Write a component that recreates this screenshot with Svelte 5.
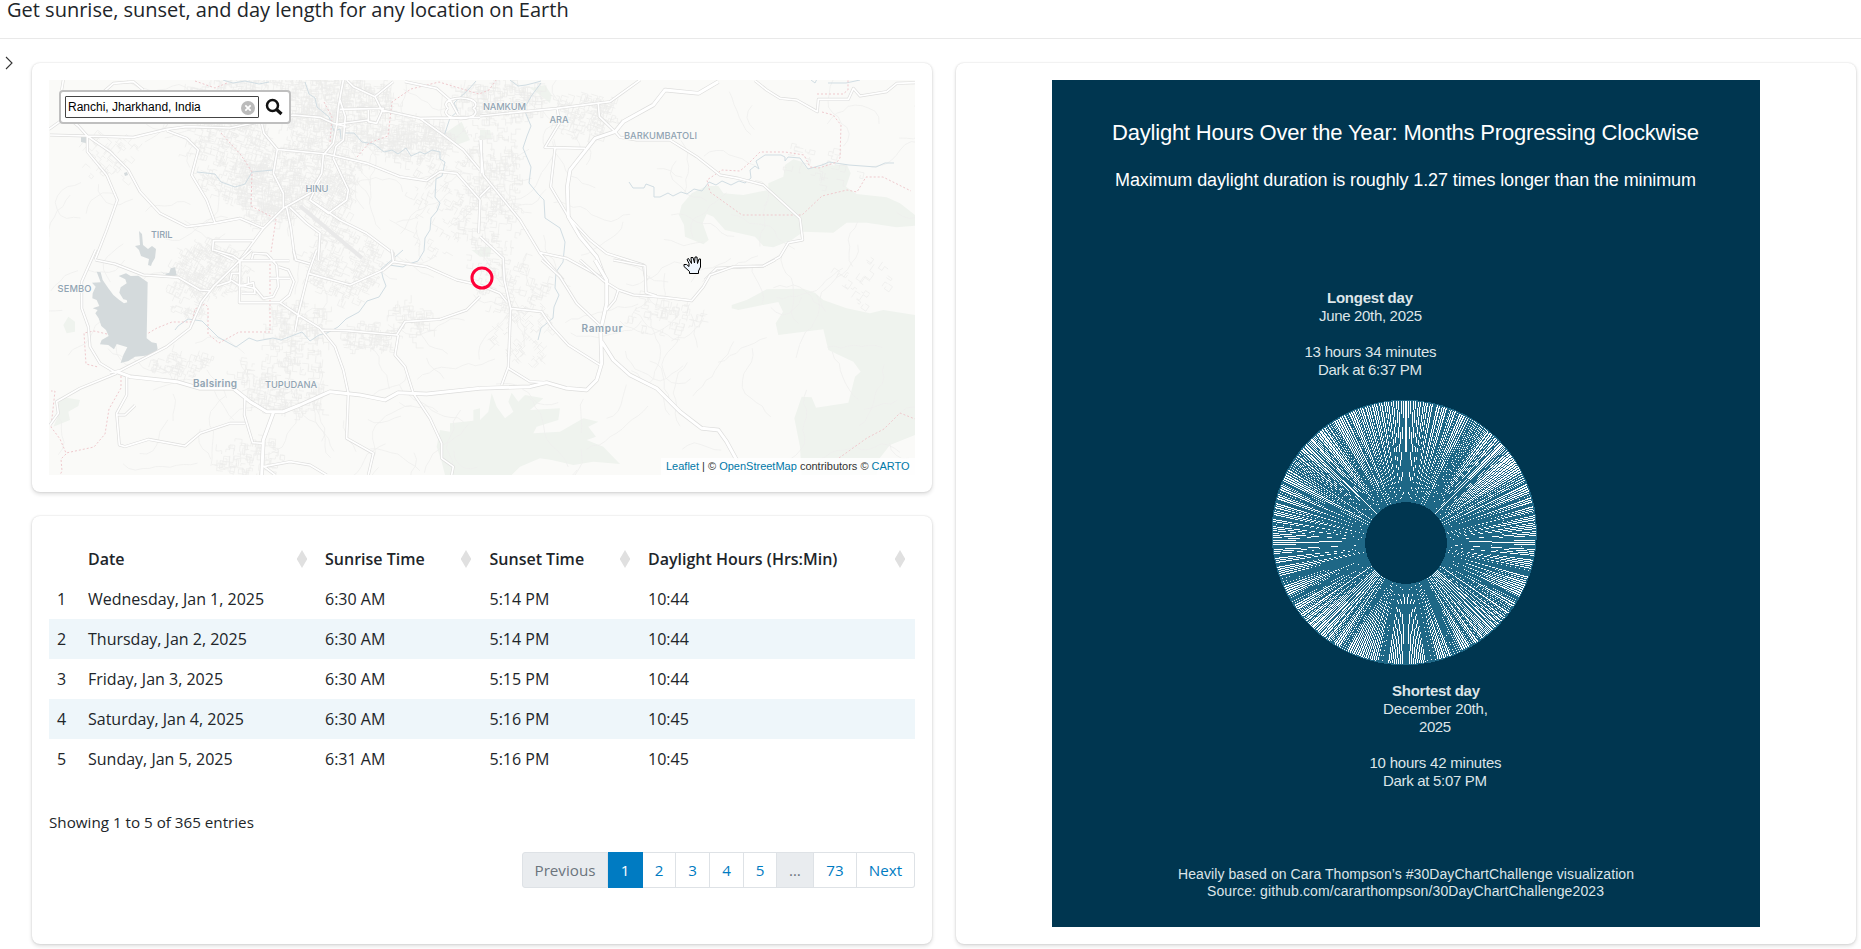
<script>
  const rows = [
    ['Wednesday, Jan 1, 2025', '6:30 AM', '5:14 PM', '10:44'],
    ['Thursday, Jan 2, 2025', '6:30 AM', '5:14 PM', '10:44'],
    ['Friday, Jan 3, 2025', '6:30 AM', '5:15 PM', '10:44'],
    ['Saturday, Jan 4, 2025', '6:30 AM', '5:16 PM', '10:45'],
    ['Sunday, Jan 5, 2025', '6:31 AM', '5:16 PM', '10:45']
  ];
  const heads = ['Date', 'Sunrise Time', 'Sunset Time', 'Daylight Hours (Hrs:Min)'];
  const pages = [
    ['Previous', 86, 'off'], ['1', 35, 'on'], ['2', 33, ''], ['3', 34, ''], ['4', 34, ''],
    ['5', 33, ''], ['…', 37, 'off'], ['73', 43, ''], ['Next', 58, '']
  ];

  // Radial chart: light bars separated by one outline per day, rasterised to whole pixels.
  function spokes() {
    const ox = 1271, oy = 399, n = 268;
    const cx = 1405.5, cy = 542.5;
    const grid = new Uint8Array(n * n);
    const ccx = 1404.2, ccy = 532.5, R = 132;
    for (let y = 0; y < n; y++) {
      for (let x = 0; x < n; x++) {
        const px = ox + x + 0.5, py = oy + y + 0.5;
        if (Math.hypot(px - ccx, py - ccy) < 131.5 && Math.hypot(px - 1406, py - 543) > 41.5) grid[y * n + x] = 1;
      }
    }
    function edge(a) {
      const dx = Math.sin(a), dy = -Math.cos(a);
      const px = cx - ccx, py = cy - ccy;
      const b = px * dx + py * dy;
      return -b + Math.sqrt(b * b - (px * px + py * py - R * R));
    }
    function line(a) {
      const dx = Math.sin(a), dy = -Math.cos(a), r1 = edge(a);
      let x0 = Math.round(cx + dx * 41 - ox), y0 = Math.round(cy + dy * 41 - oy);
      const x1 = Math.round(cx + dx * r1 - ox), y1 = Math.round(cy + dy * r1 - oy);
      const ax = Math.abs(x1 - x0), ay = Math.abs(y1 - y0);
      const sx = x0 < x1 ? 1 : -1, sy = y0 < y1 ? 1 : -1;
      let e = ax - ay;
      for (let k = 0; k < 400; k++) {
        if (x0 >= 0 && y0 >= 0 && x0 < n && y0 < n) grid[y0 * n + x0] = 0;
        if (x0 === x1 && y0 === y1) break;
        const e2 = 2 * e;
        if (e2 > -ay) { e -= ay; x0 += sx; }
        if (e2 < ax) { e += ax; y0 += sy; }
      }
    }
    const step = (Math.PI * 2) / 365;
    for (let i = 0; i < 365; i++) {
      line((i + 0.41) * step);
      line((i + 0.59) * step);
    }
    let d = '';
    for (let y = 0; y < n; y++) {
      for (let x = 0; x < n; x++) {
        if (!grid[y * n + x]) continue;
        let w = 1;
        while (x + w < n && grid[y * n + x + w]) w++;
        d += `M${ox + x} ${oy + y}h${w}v1h-${w}z`;
        x += w;
      }
    }
    return d;
  }
  const spokePath = spokes();

  // Local streets: dense grids in built-up areas and wandering rural tracks.
  let seed = 7;
  function rnd() {
    seed = (seed * 16807) % 2147483647;
    return seed / 2147483647;
  }
  function town(cx, cy, rx, ry, n, rot) {
    let d = '';
    for (let i = 0; i < n; i++) {
      const t = rnd() * 6.283, q = Math.sqrt(rnd());
      let x = cx + Math.cos(t) * rx * q, y = cy + Math.sin(t) * ry * q;
      d += `M${x.toFixed(1)} ${y.toFixed(1)}`;
      let a = rot + Math.floor(rnd() * 4) * 1.571;
      const m = 2 + Math.floor(rnd() * 3);
      for (let j = 0; j < m; j++) {
        const l = 2 + rnd() * 6;
        x += Math.cos(a) * l; y += Math.sin(a) * l;
        d += `L${x.toFixed(1)} ${y.toFixed(1)}`;
        a += rnd() < 0.5 ? 1.571 : -1.571;
      }
    }
    return d;
  }
  function tracks(n) {
    let d = '';
    for (let i = 0; i < n; i++) {
      let x = 49 + rnd() * 866, y = 80 + rnd() * 395, a = rnd() * 6.283;
      d += `M${x.toFixed(1)} ${y.toFixed(1)}`;
      const m = 4 + Math.floor(rnd() * 9);
      for (let j = 0; j < m; j++) {
        a += (rnd() - 0.5) * 1.3;
        x += Math.cos(a) * 7; y += Math.sin(a) * 7;
        d += `L${x.toFixed(1)} ${y.toFixed(1)}`;
      }
    }
    return d;
  }
  const dense = [
    [290, 100, 105, 24, 330, 0.1], [232, 150, 40, 50, 260, 0.3], [270, 190, 36, 34, 300, 0.1],
    [325, 150, 40, 40, 220, 0.2], [345, 110, 50, 30, 200, 0], [410, 140, 42, 18, 240, 0.1],
    [330, 200, 22, 28, 150, 0.5], [500, 100, 45, 20, 150, 0], [585, 115, 32, 20, 110, 0.3],
    [490, 160, 30, 50, 130, 0], [490, 225, 35, 45, 100, 0.1], [345, 265, 40, 35, 190, 0.4],
    [210, 270, 35, 26, 170, 0.5], [190, 290, 18, 30, 70, 0.4], [300, 330, 30, 28, 120, 0],
    [285, 385, 45, 30, 160, 0.1], [370, 338, 24, 14, 70, 0.1], [180, 364, 30, 12, 50, 0.3],
    [250, 460, 36, 18, 80, 0.1], [410, 320, 22, 18, 50, 0], [107, 155, 25, 25, 40, 0.7],
    [515, 285, 40, 28, 70, 0.3], [525, 335, 30, 30, 60, 0.8], [670, 315, 40, 16, 50, 0.2],
    [820, 165, 40, 20, 25, 0.2], [870, 280, 35, 25, 20, 0.6], [440, 205, 30, 60, 60, 0.5]
  ].map((t) => town(...t)).join('');
  const rural = tracks(190);

  const A = [
    'M147 388L200 350L235 378L262 408L262 455L320 525L352 600L320 690L285 780',
    'M150 405L262 408L400 412L500 388L560 380L690 384L780 365L880 345L960 352L1000 370L1040 380',
    'M190 240L185 270',
    'M262 408L330 455L385 510L420 575L480 640L560 680L640 670L720 655L790 685',
    'M500 392L560 415L595 450L575 525L620 600L645 668',
    'M785 370L792 400L832 448L820 520L850 580L850 625',
    'M832 448L980 462L1100 490L1200 530L1280 542L1320 515L1370 520L1440 600',
    'M720 780L790 685L850 625L930 580L965 520L970 465L1000 430L1010 375L1015 320L1030 240',
    'M1000 475L1008 440L1030 420L1036 350L1020 300',
    'M860 622L872 680L885 780', 'M870 622L920 670L960 700L955 780',
    'M1000 475L1045 570L1040 600L985 640L930 600L960 540',
    'M930 600L1020 660L1100 700L1180 760L1182 780', 'M1040 240L1060 260L1125 290L1180 245',
    'M1125 290L1145 330L1260 355L1330 405L1390 450L1440 510', 'M1020 328L1150 325L1130 370L1105 365L1105 330',
    'M1015 372L1105 360', 'M1260 355L1440 352', 'M1215 245L1310 265L1350 300L1375 345',
    'M1345 325A45 20 0 1 0 1420 325A45 20 0 1 0 1345 325',
    'M760 722L640 722L638 750L700 780', 'M300 285L340 250L400 245L430 270', 'M1440 600L1436 700'
  ];
  const B = [
    'M0 168L130 155L230 145L390 125L480 60', 'M355 130L358 170L405 215L420 232L470 240L570 240L650 290L720 345L775 355L850 375L905 425L960 475L968 540L925 548L900 590L850 618L710 625L675 660',
    'M232 145L238 190L195 262L315 265', 'M225 265L212 380L265 470L330 540L380 580L490 615L498 660',
    'M0 240L10 345L120 480L180 580L250 660', 'M180 578L260 595L370 655', 'M0 530L70 595L70 660',
    'M0 410L30 380M4 240L4 340', 'M825 62L860 90L900 115L950 120L1012 155L1015 118L1105 118L1120 85L1140 108L1220 95L1250 70L1305 68'
  ];
  const C = [
    'M287 0L245 95L245 175L265 230L270 290L300 340L350 370', 'M287 30L345 42L430 75L535 82L600 120L630 122',
    'M755 0L720 32L640 110L605 155L570 235L500 290L360 362L330 368',
    'M640 0L700 18L720 32L718 158L840 158L895 195L960 235L1005 290L1030 360L1045 430L1040 565L1120 610L1105 675',
    'M720 32L868 32', 'M755 28L760 10L800 12L830 45L835 110L820 140L790 145L765 115L720 105', 'M835 50L865 60L882 95L868 135L840 158',
    'M720 70L695 70L690 95L650 108M690 88L720 108L760 98L765 130L725 130', 'M808 85L870 85M745 80L745 105',
    'M950 0L925 70L895 190L885 245', 'M925 70L1050 105L1150 60L1180 35L1280 50L1370 90L1415 100L1440 115',
    'M880 0L888 30L930 42', 'M1175 0L1180 35', 'M965 240L1040 242L1190 255L1215 215L1320 208L1400 180L1440 140',
    'M1195 255L1185 315L1215 350L1240 430L1290 505L1325 580L1325 625L1360 650L1355 675',
    'M150 525L175 490L170 455L240 415L350 370', 'M380 380L380 435L350 490L358 585L375 590L445 568L555 588L600 550L690 520L735 520',
    'M350 495L375 495L405 466', 'M735 440L733 495L758 578L788 580', 'M790 650L870 635L930 645L980 675', 'M790 648L825 675'
  ];
  const D = [
    'M70 0L73 60L92 145L85 320L65 375', 'M92 145L185 155L215 200L265 255L360 315', 'M0 75L60 100L80 125',
    'M185 0L240 50L290 130L370 205', 'M300 0L370 62L415 90L460 105L550 112L635 122L670 80L690 45L760 20L850 18L885 0',
    'M415 90L405 120L380 150', 'M400 0L495 18L498 98L530 108', 'M85 325L150 365L205 368'
  ];
  const bigB = ['M715 65L655 100L555 90L520 135L430 185L405 215L345 235L270 330L262 380L265 470L300 530L350 590L380 670'];
  const bigC = ['M350 365L390 380L530 395L600 415L700 415L750 455L800 485L850 485L900 465L990 425L1080 435L1155 450L1195 428L1280 432L1440 415', 'M820 488L790 570L785 675'];
  const bigD = ['M0 385L150 380L200 368L260 385L320 390L350 360L365 310L362 210L380 130L380 60L345 0', 'M365 245L400 300L450 345L530 385L600 455L665 505L715 510L740 545L770 600'];
  const layers = [
    ['scale(.33333)', A, []],
    ['translate(480 60) scale(.33333)', B, bigB],
    ['translate(0 250) scale(.33333)', C, bigC],
    ['translate(480 260) scale(.33333)', D, bigD]
  ];
</script>

<header>Get sunrise, sunset, and day length for any location on Earth</header>
<main>
  <svg class="chev" width="9" height="14" viewBox="0 0 9 14"><path d="M1 1l6 6-6 6" fill="none" stroke="#333" stroke-width="1.1" /></svg>
  <div class="left">
    <section class="card mapcard">
      <div class="map">
        <svg class="tiles" width="866" height="395" viewBox="49 80 866 395">
          <rect x="49" y="80" width="866" height="395" fill="#fafaf8" />
          <g fill="#eff3ee">
            <g transform="translate(480 60) scale(.33333)">
              <path d="M635 400L680 378L715 378L730 400L790 405L865 390L865 370L910 350L915 315L940 298L965 305L980 325L1100 312L1112 340L1098 380L1130 402L1220 412L1260 430L1305 465V497L1250 502L1160 488L1100 488L1060 518L970 515L935 540L880 562L850 558L825 530L735 510L700 470L680 462L668 490L686 540L670 553L615 530L612 495L597 465L605 435Z" />
              <path d="M150 85L195 75L215 105L210 130L180 105ZM0 210L30 210L35 235L0 240ZM0 560L35 560L30 590L0 590Z" />
            </g>
            <g transform="translate(480 260) scale(.33333)">
              <path d="M755 135L800 120L860 88L970 86L1005 98L1030 120L1100 145L1170 160L1210 150L1305 165V525L1230 555L1195 600L1190 645H965L960 560L943 475L965 410L995 412L1008 443L1105 428L1125 350L1142 335L1120 305L1045 270L1030 208L895 225L887 190L909 155L895 126L775 150L755 145Z" />
              <path d="M0 480L25 455L35 400L50 440L75 475L100 455L85 425L95 398L115 425L135 405L190 415L150 450L240 445L235 480L170 500L160 520L240 515L310 475L355 485L325 500L348 530L320 540L370 560L420 612L340 605L280 615L215 600L180 595L120 620L95 645H0Z" />
            </g>
            <g transform="translate(0 250) scale(.33333)">
              <path d="M1440 475L1420 480L1420 512L1350 520L1350 545L1320 540L1310 590L1325 635L1335 675H1440ZM170 460L190 442L240 450L235 468L205 485L210 510L160 530L178 490ZM190 225L205 200L225 215L225 245L200 250Z" />
              <path d="M1415 0H1440V20ZM1335-350L1385-385L1410-330L1370-315Z" />
            </g>
          </g>
          <path d={rural} fill="none" stroke="#efefed" stroke-width=".8" />
          <path d={dense} fill="none" stroke="#ededeb" stroke-width=".7" />
          <path d="M300 206L362 258" stroke="#e9e9e9" stroke-width="4" />
          <g fill="#d4dadc">
            <path d="M139 231l3 3 1 11 5 4 4-3 4 3-1 9-3 5-1 3-3-1 1-6-8-3-2-6-4-4 5-1zM81 137l5-1v7l-5-1zM124 173l3-1 1 3-3 1z" />
            <g transform="translate(0 250) scale(.33333)">
              <path d="M290 65L302 67L308 90L325 115L340 135L358 150L372 160L382 157L380 150L370 148L358 128L362 112L380 100L376 88L356 78L378 70L392 78L415 77L443 97L440 265L455 277L470 280L473 298L460 312L435 317L405 320L385 333L362 339L370 315L382 292L370 288L350 282L342 298L325 285L300 283L305 270L326 258L318 240L304 228L296 205L286 190L293 180L278 175L298 168L290 150L277 145L278 130L287 110L276 98L302 97Z" />
              <path d="M480 62L492 72L508 68L512 55L525 52L530 75L515 83L500 76Z" />
            </g>
          </g>
          <g fill="none" stroke="#d1dde3" stroke-width="1">
            <path d="M223 80l10 3 12-2 14 3 10-2M305 82l4 12 6 4 2 9 12 10 5 14 6-2 1 10M344 133l10 0 8 9 12 2 10 8 8-2 6 4 8-6 5 8 9-4 5 2 7-4 8 2v7l5 3-3 14-6 3-1 18 5 6-3 8-6 7-1 12-5 8-1 13-6 10-12 4-3 2-14-2M197 172l18 2 6 8 14 5 10-3 7-12 21-2M403 250l-9 8-13 11 2 9 3 8-7 11-12 4-8 11-13 7-8 8-11 6-8 2-9 6-8-9-21 8-8-2-16 3-8-3-13 9-18-10-16-16-14-2-10 7-3 4" />
            <path d="M444 136l6-18 8-7-4-8 15-14 7-8M510 80l8 6 8-1 8-2 7-2M541 83l-9 12-8 14 7 17-4 10-4 12 8 19-2 16 9 11 6 6 1 18 15 10 5 14-2 20-7 10-1 16 4 7-5 12-1 11-12 10-3 12" />
            <path d="M629 182l4 6 11 0 2-4 8 3v10l6 0 8-4 5 3 8-4 6 2 7-5 8 2 7-9 7 3 6-4 9 4 8-4 6 2 6-5-1-8 5-4 4 3-3-8 9-6 16 0 4 2v4l3-4 12 1 8 11 14-4 7-3 20 3 27 2 9-4h9" />
            <path d="M811 80l4 3 2-4M828 83h18l14-3" />
          </g>
          <g fill="none" stroke="#efc9cd" stroke-width="1" stroke-dasharray="2 2">
            <path d="M195 81l20 7 12-5M221 133l20 22 11 17-1 34 25 13-5 33M324 102l8 15-2 25M357 157l12-14 19-7 4-34 19-13 28-7 40 12 10-4 10-14" />
            <path d="M270 264v68h-31l-20 11-11-9V307l-3-3-10 5-3 13h-20l-15 6-10 6M107 334l-13-3-10 2 2 31 12 3M121 376v12l-12 21-4 25-11 13-28 6-6-14-9-12 4-36h-4M66 454l-5 5 1 12-2 4" />
            <path d="M817 94h26l5-4v-10M822 112l11 3 8 10-1 33-3 4-18 6-9-1-6-12-19-3h-25l-12 12-8 7-18-1-15 10 3 12 32 23h60l20-19 25-6 10 2 9-15h17l28 14M839 458l28-20 17-9 16-16 15 6" />
          </g>
          {#each layers as [t, mid, big]}
            <g transform={t} fill="none" stroke-linejoin="round">
              <path d={mid.join('')} stroke="#dededd" stroke-width="9" />
              <path d={big.join('')} stroke="#dddddc" stroke-width="13" />
              <path d={mid.join('')} stroke="#fff" stroke-width="5" />
              <path d={big.join('')} stroke="#fff" stroke-width="9" />
            </g>
          {/each}
          <g class="names">
            <text x="305.500" y="191.500" textLength="23">HINU</text>
            <text x="151" y="237.500" textLength="21.500">TIRIL</text>
            <text x="57.500" y="292" textLength="34">SEMBO</text>
            <text x="265" y="387.500" textLength="52">TUPUDANA</text>
            <text x="483" y="110" textLength="43">NAMKUM</text>
            <text x="549.500" y="123" textLength="19">ARA</text>
            <text x="624" y="139" textLength="73">BARKUMBATOLI</text>
            <text class="b" x="193" y="387" textLength="44">Balsiring</text>
            <text class="b" x="581.500" y="331.500" textLength="41">Rampur</text>
          </g>
          <circle cx="482" cy="278" r="10" fill="none" stroke="#ff0038" stroke-width="3" />
          <path d="M689.500 273.500v-2l-5.500-5v-2h2.500l2.500 2v-3l-2-4 1.500-1 3 5-.5-6h2l1.500 5.500.5-6h2l.5 6.500 1.500-4.500h1.500v8l-2 4v2.500z" fill="#eef6ff" stroke="#000" stroke-width="1" stroke-linejoin="round" />
        </svg>
        <div class="search">
          <div class="field"><span>Ranchi, Jharkhand, India</span>
            <svg width="14" height="14" viewBox="0 0 14 14"><circle cx="7" cy="7" r="7" fill="#bbb" /><path d="M4.300 4.300l5.400 5.400m0-5.400l-5.400 5.400" stroke="#fff" stroke-width="1.700" /></svg>
          </div>
          <svg width="18" height="18" viewBox="0 0 18 18"><circle cx="7.500" cy="7.500" r="5.500" fill="none" stroke="#111" stroke-width="2.500" /><path d="M11 11l5.500 5" stroke="#111" stroke-width="3.200" /></svg>
        </div>
        <div class="attr"><a>Leaflet</a> | © <a>OpenStreetMap</a> contributors © <a>CARTO</a></div>
      </div>
    </section>
    <section class="card tablecard">
      <table>
        <colgroup><col style:width="31px" /><col style:width="237px" /><col style:width="164.500px" /><col style:width="158.500px" /><col /></colgroup>
        <thead><tr><th></th>
          {#each heads as h}
            <th><div><span>{h}</span><svg width="10" height="18" viewBox="0 0 10 18"><path d="M5 0l5 8.500H0zM5 18L0 9.500h10z M0 8h10v2H0z" fill="#e0e0e0" /></svg></div></th>
          {/each}
        </tr></thead>
        <tbody>
          {#each rows as r, i}
            <tr><td>{i + 1}</td>{#each r as c}<td>{c}</td>{/each}</tr>
          {/each}
        </tbody>
      </table>
      <p>Showing 1 to 5 of 365 entries</p>
      <nav>
        {#each pages as [label, w, kind]}
          <span class={kind} style:width="{w}px">{label}</span>
        {/each}
      </nav>
    </section>
  </div>
  <section class="card plotcard">
    <svg width="708" height="847" viewBox="1052 80 708 847">
      <rect x="1052" y="80" width="708" height="847" fill="#003650" />
      <g class="plot">
        <text x="1405.500" y="140" font-size="22" fill="#fff" textLength="587">Daylight Hours Over the Year: Months Progressing Clockwise</text>
        <text x="1405.500" y="186" font-size="18" fill="#fff" textLength="581">Maximum daylight duration is roughly 1.27 times longer than the minimum</text>
        <text x="1370" y="303" font-size="15" font-weight="700" textLength="86">Longest day</text>
        <text x="1370.500" y="321" font-size="15" textLength="103">June 20th, 2025</text>
        <text x="1370.500" y="357" font-size="15" textLength="132">13 hours 34 minutes</text>
        <text x="1370" y="375" font-size="15" textLength="104">Dark at 6:37 PM</text>
        <text x="1436" y="696" font-size="15" font-weight="700" textLength="88">Shortest day</text>
        <text x="1435.500" y="714" font-size="15" textLength="105">December 20th,</text>
        <text x="1435" y="732" font-size="15" textLength="32">2025</text>
        <text x="1435.500" y="768" font-size="15" textLength="132">10 hours 42 minutes</text>
        <text x="1435" y="786" font-size="15" textLength="104">Dark at 5:07 PM</text>
        <text x="1406" y="879" font-size="14" textLength="456">Heavily based on Cara Thompson’s #30DayChartChallenge visualization</text>
        <text x="1405.500" y="896" font-size="14" textLength="397">Source: github.com/cararthompson/30DayChartChallenge2023</text>
      </g>
      <g shape-rendering="crispEdges">
        <circle cx="1404.200" cy="532.500" r="132.700" fill="#1e6786" />
        <path d={spokePath} fill="#fff" />
        <circle cx="1406" cy="543" r="41" fill="#003650" />
      </g>
    </svg>
  </section>
</main>

<style>
  :global(body) { background: #fff; height: 949px; overflow: hidden; font-family: "Open Sans", sans-serif; color: #212529; }
  header { box-sizing: border-box; height: 39px; padding-left: 7px; border-bottom: 1px solid #e9e9e9; font-size: 20px; line-height: 20px; white-space: nowrap; }
  main { display: flex; height: 910px; box-sizing: border-box; padding: 24px 5px 0 5px; align-items: flex-start; }
  .chev { flex: none; margin: -7px 18px 0 0; }
  .left { display: flex; flex-direction: column; gap: 24px; margin-right: 24px; }
  .card { box-sizing: border-box; width: 900px; background: #fff; border-radius: 8px; box-shadow: 0 0 2px rgba(0,0,0,.14), 0 2px 4px rgba(0,0,0,.14); }
  .mapcard { height: 429px; padding: 17px; }
  .map { position: relative; width: 866px; height: 395px; }
  .tiles { display: block; }
  .names { font: 500 9.300px "Inter", sans-serif; fill: #91a4b3; stroke: #fafaf8; stroke-width: 1.5px; paint-order: stroke; }
  .names .b { font-weight: 600; font-size: 10px; }
  .search { position: absolute; left: 10px; top: 10px; width: 232px; height: 34px; box-sizing: border-box; border: 2px solid #bfbfbf; border-radius: 4px; background: #fff; display: flex; align-items: center; padding: 0 6px 0 4px; justify-content: space-between; }
  .field { box-sizing: border-box; width: 194px; height: 22px; border: 1px solid #444; border-radius: 1px; display: flex; align-items: center; justify-content: space-between; padding: 0 3px 0 2px; font: 12px "Liberation Sans", sans-serif; color: #000; }
  .field svg { margin-top: 2px; }
  .attr { position: absolute; right: 0; bottom: 0; box-sizing: border-box; width: 254px; height: 17px; padding: 0 5px; background: rgba(255,255,255,.8); font: 11px/17px "Liberation Sans", sans-serif; color: #333; white-space: nowrap; }
  .attr a { color: #0078a8; }
  .tablecard { height: 428px; padding: 23px 17px 0; }
  table { width: 866px; table-layout: fixed; border-collapse: collapse; font-size: 16px; line-height: 24px; }
  th, td { height: 40px; box-sizing: border-box; padding: 0 8px; text-align: left; font-weight: 400; white-space: nowrap; }
  th { font-weight: 600; padding-right: 10.500px; }
  th div { display: flex; justify-content: space-between; align-items: center; }
  tbody tr:nth-child(even) { background: #eef6fa; }
  p { margin: 31px 0 0; font-size: 15.200px; line-height: 24px; }
  nav { display: flex; justify-content: flex-end; margin-top: 18px; }
  nav span { box-sizing: border-box; height: 36px; border: 1px solid #dee2e6; border-left-width: 0; font-size: 15.200px; line-height: 34px; text-align: center; color: #007bc2; }
  nav span:first-child { border-left-width: 1px; border-radius: 3px 0 0 3px; }
  nav span:last-child { border-radius: 0 3px 3px 0; }
  nav .off { background: #e9ecef; color: #6c757d; }
  nav .on { background: #007bc2; border-color: #007bc2; color: #fff; }
  .plotcard { height: 881px; padding: 17px 96px; }
  .plotcard svg { display: block; }
  .plot { font-family: "Liberation Sans", sans-serif; text-anchor: middle; fill: #dde5e9; }
</style>
